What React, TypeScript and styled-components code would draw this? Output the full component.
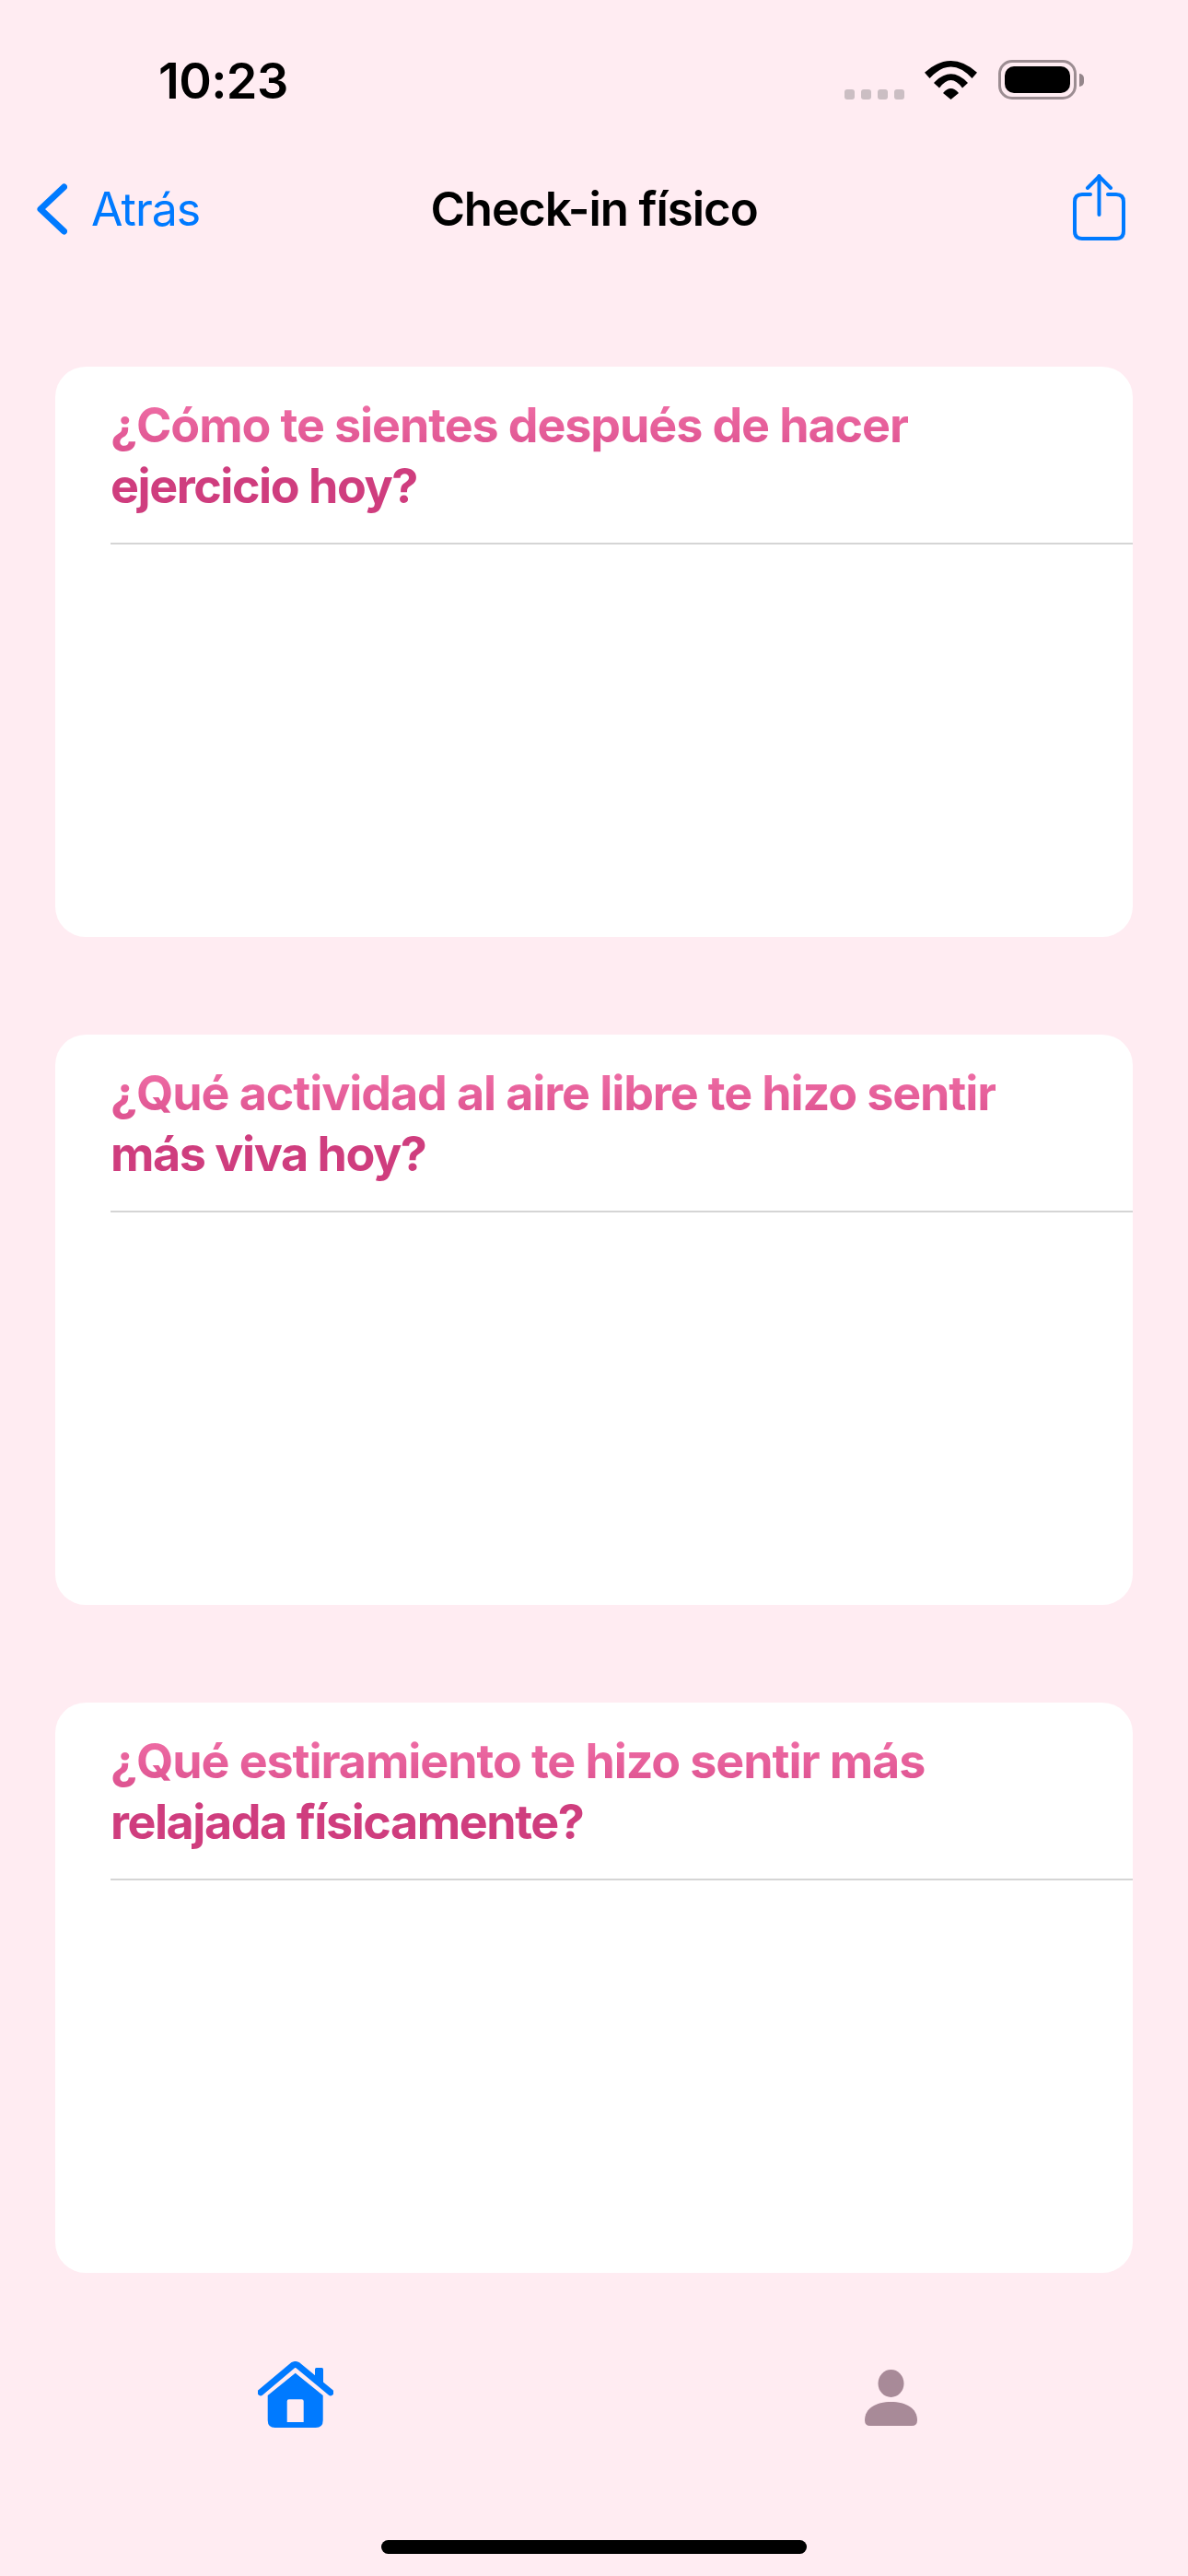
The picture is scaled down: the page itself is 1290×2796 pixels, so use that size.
import React from "react";
import styled, { createGlobalStyle } from "styled-components";

const GlobalStyle = createGlobalStyle`
  html, body {
    margin: 0;
    padding: 0;
    background: #ffecf2;
  }
  * {
    box-sizing: border-box;
  }
`;

const questions = [
  ["¿Cómo te sientes después de hacer", "ejercicio hoy?"],
  ["¿Qué actividad al aire libre te hizo sentir", "más viva hoy?"],
  ["¿Qué estiramiento te hizo sentir más", "relajada físicamente?"],
];

const App = () => {
  return (
    <>
      <GlobalStyle />
      <Screen>
        <StatusBar>
          <Time>10:23</Time>
          <StatusIcons>
            <SignalDots>
              <SignalDot />
              <SignalDot />
              <SignalDot />
              <SignalDot />
            </SignalDots>
            <WifiIcon viewBox="0 0 57 42">
              <path d="M0 12.7Q28.5 -12.7 57 12.7L51.5 19Q28.5 -6 5.5 19Z" />
              <path d="M10 24Q28.5 4.6 47 24L41 29.5Q28.5 12.5 16 29.5Z" />
              <path d="M20 35Q28.5 25 37 35L28.5 42Z" />
            </WifiIcon>
            <Battery>
              <BatteryShell>
                <BatteryLevel />
              </BatteryShell>
              <BatteryNub />
            </Battery>
          </StatusIcons>
        </StatusBar>

        <NavBar>
          <BackButton>
            <BackChevron viewBox="0 0 33 56">
              <path d="M29.5 4L4 28L29.5 52" />
            </BackChevron>
            <BackLabel>Atrás</BackLabel>
          </BackButton>
          <NavTitle>Check-in físico</NavTitle>
          <ShareIcon viewBox="0 0 57 72">
            <path d="M19 22H10Q2 22 2 30V62Q2 70 10 70H47Q55 70 55 62V30Q55 22 47 22H38" />
            <path d="M28.5 2V44" />
            <path d="M16 15L28.5 2.500L41 15" />
          </ShareIcon>
        </NavBar>

        <CardList>
          {questions.map((lines) => (
            <Card key={lines[0]}>
              <CardTitle>
                <TitleLead>{lines[0]}</TitleLead>
                <TitleStrong>{lines[1]}</TitleStrong>
              </CardTitle>
              <CardDivider />
            </Card>
          ))}
        </CardList>

        <TabBar>
          <TabSlot>
            <HomeIcon viewBox="0 0 82 72">
              <path
                fillRule="evenodd"
                d="M40.700 12.700L70.700 37V64Q70.700 72 62.700 72H18.700Q10.700 72 10.700 64V37ZM33.700 41.300Q31.700 41.300 31.700 43.300V66H49.700V43.300Q49.700 41.300 47.700 41.300Z"
              />
              <path d="M62 8.500Q62 7 63.500 7H69.500Q71 7 71 8.500V24L62 16Z" />
              <RoofLine d="M3 33.700L38 4.300Q40.700 2.700 43.400 4.300L79 33.700" />
            </HomeIcon>
          </TabSlot>
          <TabSlot>
            <PersonIcon viewBox="0 0 57 61">
              <ellipse cx="28.500" cy="15" rx="14" ry="15" />
              <path d="M0 55C0 42 12 35 28.500 35C45 35 57 42 57 55Q57 61 51 61H6Q0 61 0 55Z" />
            </PersonIcon>
          </TabSlot>
        </TabBar>

        <HomeIndicatorRow>
          <HomeIndicator />
        </HomeIndicatorRow>
      </Screen>
    </>
  );
};

const Screen = styled.div`
  width: 1290px;
  height: 2796px;
  display: flex;
  flex-direction: column;
  background: #ffecf2;
  font-family: "Inter", "Liberation Sans", sans-serif;
  overflow: hidden;
`;

const StatusBar = styled.div`
  height: 150px;
  padding: 63px 0 0 172px;
  display: flex;
  justify-content: space-between;
  align-items: flex-start;
`;

const Time = styled.div`
  font-size: 54px;
  line-height: 50px;
  font-weight: 600;
  letter-spacing: -0.600px;
  color: #000;
`;

const StatusIcons = styled.div`
  display: flex;
  align-items: flex-end;
  margin: 2px 113px 0 0;
`;

const SignalDots = styled.div`
  display: flex;
  gap: 7px;
  margin-right: 22px;
`;

const SignalDot = styled.div`
  width: 11px;
  height: 11px;
  border-radius: 3px;
  background: #cbbec3;
`;

const WifiIcon = styled.svg`
  width: 57px;
  height: 42px;
  margin-right: 23px;
  fill: #000;
`;

const Battery = styled.div`
  display: flex;
  align-items: center;
`;

const BatteryShell = styled.div`
  width: 85px;
  height: 43px;
  padding: 4px;
  border: 3px solid #9c8d92;
  border-radius: 15px;
`;

const BatteryLevel = styled.div`
  width: 100%;
  height: 100%;
  background: #000;
  border-radius: 10px;
`;

const BatteryNub = styled.div`
  width: 5px;
  height: 14px;
  margin-left: 3px;
  background: #94868b;
  border-radius: 0 7px 7px 0;
`;

const NavBar = styled.div`
  position: relative;
  height: 154px;
  padding: 0 68px 0 40px;
  display: flex;
  justify-content: space-between;
  align-items: center;
`;

const BackButton = styled.div`
  display: flex;
  align-items: center;
  gap: 26px;
`;

const BackChevron = styled.svg`
  width: 33px;
  height: 56px;
  fill: none;
  stroke: #007aff;
  stroke-width: 7px;
  stroke-linecap: round;
  stroke-linejoin: round;
`;

const BackLabel = styled.div`
  font-size: 50px;
  line-height: 60px;
  font-weight: 400;
  letter-spacing: -1px;
  color: #007aff;
`;

const NavTitle = styled.div`
  position: absolute;
  left: 0;
  right: 0;
  text-align: center;
  font-size: 51px;
  line-height: 60px;
  font-weight: 600;
  letter-spacing: -1.100px;
  color: #000;
`;

const ShareIcon = styled.svg`
  width: 57px;
  height: 72px;
  margin-bottom: 4px;
  fill: none;
  stroke: #007aff;
  stroke-width: 4px;
  stroke-linecap: round;
  stroke-linejoin: round;
`;

const CardList = styled.div`
  padding: 94px 60px 0;
  display: flex;
  flex-direction: column;
  gap: 106px;
`;

const Card = styled.div`
  height: 619px;
  padding-top: 31px;
  background: #fff;
  border-radius: 33px;
`;

const CardTitle = styled.div`
  padding: 0 40px 0 60px;
  font-size: 52px;
  line-height: 66px;
  font-weight: 700;
`;

const TitleLead = styled.div`
  white-space: nowrap;
  letter-spacing: -1.100px;
  width: fit-content;
  background: linear-gradient(#ee6ca4 15%, #df5592 85%);
  -webkit-background-clip: text;
  background-clip: text;
  color: transparent;
`;

const TitleStrong = styled.div`
  white-space: nowrap;
  letter-spacing: -1.450px;
  color: #cf3d7e;
`;

const CardDivider = styled.div`
  height: 2px;
  margin: 28px 0 0 60px;
  background: #d5d5d5;
`;

const TabBar = styled.div`
  margin-top: 96px;
  display: grid;
  grid-template-columns: 1fr 1fr;
`;

const TabSlot = styled.div`
  display: flex;
  justify-content: center;
  align-items: flex-end;
  height: 72px;
`;

const HomeIcon = styled.svg`
  width: 82px;
  height: 72px;
  margin-right: 3px;
  fill: #007aff;
`;

const RoofLine = styled.path`
  fill: none;
  stroke: #007aff;
  stroke-width: 7px;
  stroke-linecap: round;
`;

const PersonIcon = styled.svg`
  width: 57px;
  height: 61px;
  margin: 0 1px 2px 0;
  fill: #a88a98;
`;

const HomeIndicatorRow = styled.div`
  flex: 1;
  display: flex;
  justify-content: center;
  align-items: flex-end;
  padding-bottom: 24px;
`;

const HomeIndicator = styled.div`
  width: 462px;
  height: 15px;
  background: #000;
  border-radius: 8px;
`;

export default App;
